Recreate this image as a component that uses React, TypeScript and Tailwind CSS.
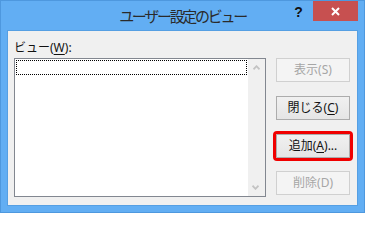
const jp = "font-['Noto_Sans','Noto_Sans_CJK_JP',sans-serif]";

function Btn({
  label,
  accel,
  suffix = "",
  disabled = false,
  marked = false,
  className = "",
}: {
  label: string;
  accel: string;
  suffix?: string;
  disabled?: boolean;
  marked?: boolean;
  className?: string;
}) {
  const base = disabled
    ? "border-[#d0d0d0] bg-[#f4f4f4] text-[#a6a6a6]"
    : "border-[#acacac] bg-linear-to-b from-[#f0f0f0] to-[#e5e5e5] text-[#111]";
  return (
    <button
      className={`${jp} w-[74px] h-[24px] border ${base} text-[12px] leading-none flex items-center justify-center ${
        marked ? "outline-[3px] outline-solid outline-[#f00000] rounded-[1px]" : ""
      } ${className}`}
    >
      {label}(
      <span className={disabled ? "" : "underline underline-offset-2"}>{accel}</span>)
      {suffix}
    </button>
  );
}

function Chevron({ up }: { up?: boolean }) {
  return (
    <svg width="7" height="5" viewBox="0 0 7 5" className="block">
      <path
        d={up ? "M0.5 4.3 L3.5 1.2 L6.5 4.3" : "M0.5 0.7 L3.5 3.8 L6.5 0.7"}
        fill="none"
        stroke="#c3c3c3"
        strokeWidth="1.8"
      />
    </svg>
  );
}

export default function App() {
  return (
    <div className={`${jp} w-[365px] h-[213px] bg-[#62aef3] border border-[#4e98de] flex flex-col px-[6px] pb-[6px]`}>
      {/* Title bar */}
      <div className="h-[29px] flex shrink-0">
        <div className="w-[74px]" />
        <div className="flex-1 text-center pt-[7px] text-[15px] leading-[17px] tracking-[-2.3px] text-[#2a2a2a]">
          ユーザー設定のビュー
        </div>
        <div className="w-[74px] flex items-start">
          <div className="w-[29px] h-[21px] flex items-center justify-center text-[14px] font-bold text-[#111] font-['Liberation_Sans',sans-serif] pt-[2px]">
            ?
          </div>
          <div className="w-[45px] h-[20px] bg-[#c75050] flex items-center justify-center">
            <svg width="9" height="9" viewBox="0 0 9 9">
              <path d="M1 1 L8 8 M8 1 L1 8" stroke="#fff" strokeWidth="2" />
            </svg>
          </div>
        </div>
      </div>

      {/* Client area */}
      <div className="flex-1 border border-[#559fe3] bg-[#f0f0f0] flex">
        <div className="pl-[6px] pt-[10px] flex flex-col">
          <div className="h-[17px] text-[12px] leading-[14px] text-[#111]">
            ビュー(<span className="underline underline-offset-2">W</span>):
          </div>
          <div className="w-[252px] h-[139px] border border-[#828790] bg-white flex">
            <div className="flex-1 p-px">
              <div className="h-[15px] border border-dotted border-black" />
            </div>
            <div className="w-[17px] bg-[#f0f0f0] flex flex-col justify-between">
              <div className="h-[17px] flex items-center justify-center">
                <Chevron up />
              </div>
              <div className="h-[17px] flex items-center justify-center pr-[2px]">
                <Chevron />
              </div>
            </div>
          </div>
        </div>
        <div className="ml-[10px] pt-[27px] flex flex-col">
          <Btn label="表示" accel="S" disabled />
          <Btn label="閉じる" accel="C" className="mt-[14px]" />
          <Btn label="追加" accel="A" suffix="..." marked className="mt-[14px]" />
          <Btn label="削除" accel="D" disabled className="mt-[13px]" />
        </div>
      </div>
    </div>
  );
}
